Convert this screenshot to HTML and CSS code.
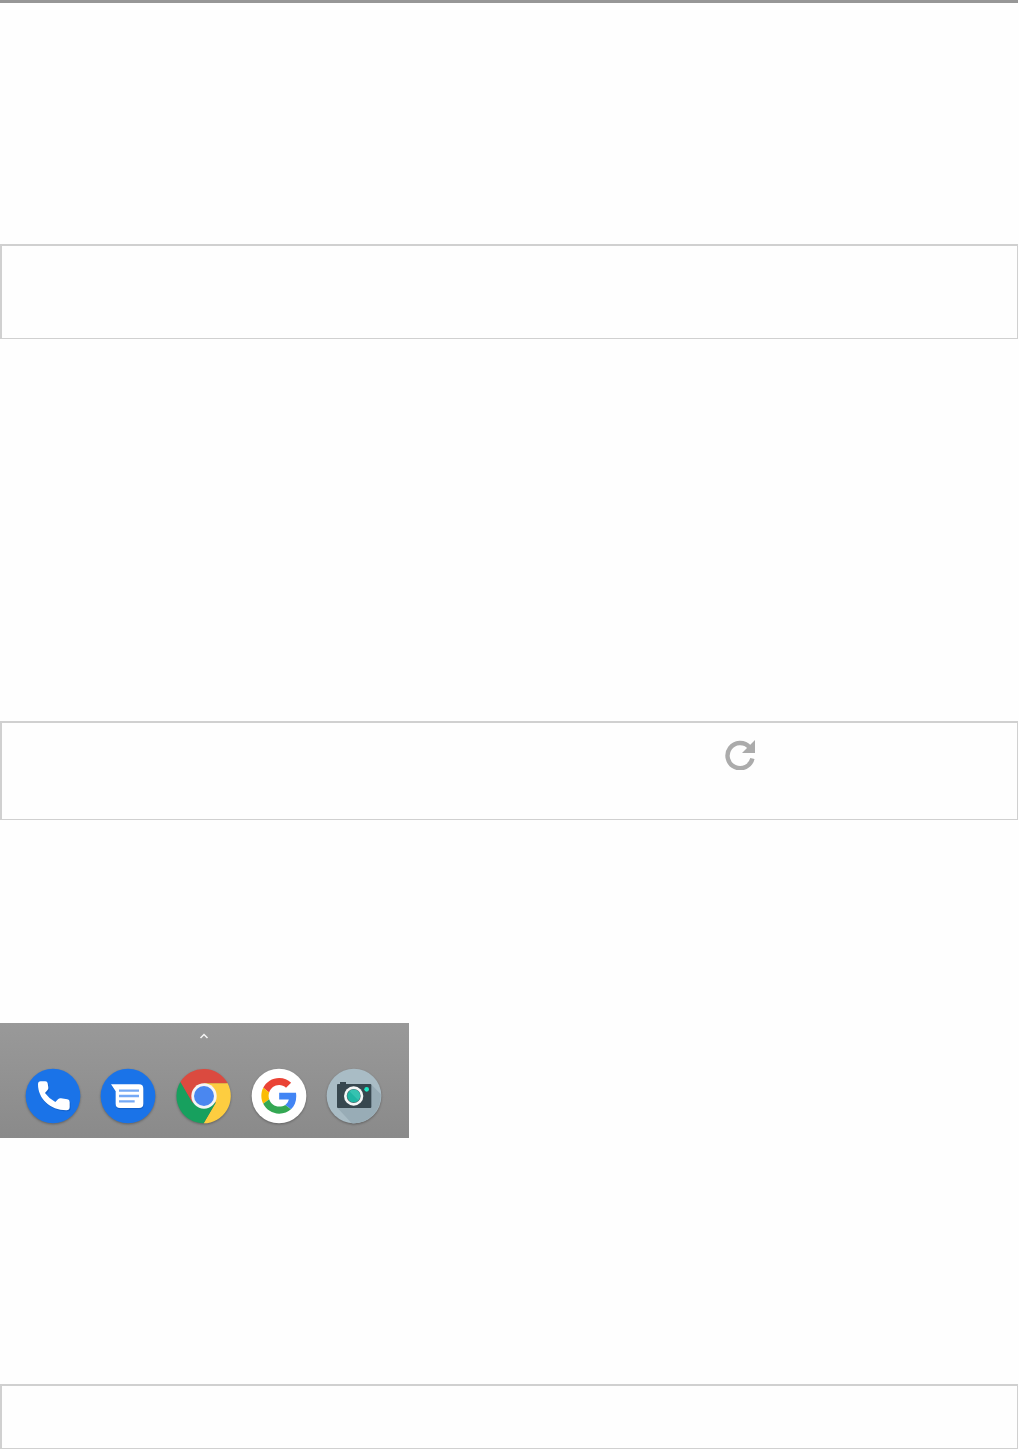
FILE: index.html
```html
<!DOCTYPE html>
<html lang="en">
<head>
    <meta charset="UTF-8">
    <meta name="viewport" content="width=device-width, initial-scale=1.0">
    <title>Home screen</title>
    <link rel="stylesheet" href="styles.css">
</head>
<body>
    <div class="container">
        <hr class="rule">

        <div class="box box-first"></div>

        <div class="box box-refresh">
            <button type="button" class="refresh" aria-label="Refresh">
                <svg viewBox="0 0 30 30">
                    <path fill="none" stroke="#ababab" stroke-width="4.4" d="M24.5 7.2A12.6 12.6 0 1 0 27.4 18.5"/>
                    <path fill="#ababab" d="M30 0v13H17z"/>
                </svg>
            </button>
        </div>

        <nav class="dock">
            <svg class="caret" viewBox="0 0 10 6">
                <path d="M1.500 5 5 1.500 8.500 5" fill="none" stroke="#f4f4f4" stroke-width="1.5"/>
            </svg>
            <div class="apps">
                <a href="#" class="app" aria-label="Phone">
                    <svg viewBox="0 0 168 168">
                        <circle cx="84" cy="84" r="82" fill="#1a73e8"/>
                        <path fill="#0c4fae" opacity=".5" d="M41 54q0-10 8-10h15q6 0 7 6l2 12q1 6-3 9l-7 8q12 18 31 28l8-9q4-3 9-2l19 3q7 1 7 8v13q0 10-10 10C77 130 41 96 41 54z"/>
                        <path fill="#fff" d="M39 49q0-9 8-9h14q6 0 7 6l2 12q1 6-3 9l-7 8q12 17 31 27l8-8q4-4 9-3l19 3q7 1 7 8v15q0 10-10 10C75 127 39 92 39 49z"/>
                    </svg>
                </a>
                <a href="#" class="app" aria-label="Messages">
                    <svg viewBox="0 0 168 168">
                        <circle cx="84" cy="84" r="82" fill="#1a73e8"/>
                        <path fill="#0c4fae" opacity=".5" d="M34 53h84q13 0 13 13v45q0 13-13 13H61q-13 0-13-13V72z"/>
                        <path fill="#fff" d="M33 49h84q13 0 13 13v45q0 13-13 13H60q-13 0-13-13V70z"/>
                        <path d="M57 68h60M57 84h60M57 100h47" fill="none" stroke="#75a9f5" stroke-width="7"/>
                    </svg>
                </a>
                <a href="#" class="app" aria-label="Chrome">
                    <svg viewBox="0 0 168 168">
                        <path fill="#db4a3f" d="M13 42A82 82 0 0 1 155 46H84L49 104z"/>
                        <path fill="#fdcd40" d="M155 46A82 82 0 0 1 83 166l36-62-35-58z"/>
                        <path fill="#17a05e" d="M83 166A82 82 0 0 1 13 42l36 62h70z"/>
                        <circle cx="84" cy="84" r="38" fill="#f5f5f5"/>
                        <circle cx="84" cy="84" r="30" fill="#4a87f0"/>
                    </svg>
                </a>
                <a href="#" class="app" aria-label="Google">
                    <svg viewBox="0 0 168 168">
                        <circle cx="84" cy="84" r="82" fill="#fff"/>
                        <g transform="translate(31 30) scale(2.23)">
                            <path fill="#ea4335" d="M24 9.5c3.54 0 6.71 1.22 9.21 3.6l6.85-6.85C35.9 2.38 30.47 0 24 0 14.62 0 6.51 5.38 2.56 13.22l7.98 6.19C12.43 13.72 17.74 9.5 24 9.5z"/>
                            <path fill="#4285f4" d="M46.98 24.55c0-1.57-.15-3.09-.38-4.55H24v9.02h12.94c-.58 2.96-2.26 5.48-4.78 7.18l7.73 6c4.51-4.18 7.09-10.36 7.09-17.65z"/>
                            <path fill="#fbbc05" d="M10.53 28.59c-.48-1.45-.76-2.99-.76-4.59s.27-3.14.76-4.59l-7.98-6.19C.92 16.46 0 20.12 0 24c0 3.88.92 7.54 2.56 10.78l7.97-6.19z"/>
                            <path fill="#34a853" d="M24 48c6.48 0 11.93-2.13 15.89-5.81l-7.73-6c-2.15 1.45-4.92 2.3-8.16 2.3-6.26 0-11.57-4.22-13.47-9.91l-7.98 6.19C6.51 42.62 14.62 48 24 48z"/>
                        </g>
                    </svg>
                </a>
                <a href="#" class="app" aria-label="Camera">
                    <svg viewBox="0 0 168 168">
                        <circle cx="84" cy="84" r="82" fill="#a9bcc5"/>
                        <path fill="#98acb6" d="M135 49l29 29A82 82 0 0 1 77 166L34 119z"/>
                        <path fill="#37474f" d="M42 42h18v6h73q3 0 3 3v66q0 3-3 3H36q-3 0-3-3V51q0-3 3-3h6z"/>
                        <circle cx="83" cy="84" r="29" fill="#f5f7f7"/>
                        <circle cx="83" cy="84" r="21" fill="#4b6b70"/>
                        <circle cx="83" cy="84" r="19" fill="#1fb5a3"/>
                        <path fill="#35c2b0" d="M70 70a19 19 0 0 1 27 27z"/>
                        <circle cx="122" cy="64" r="7" fill="#1de9c6"/>
                    </svg>
                </a>
            </div>
        </nav>

        <div class="box box-last"></div>
    </div>
</body>
</html>
```
FILE: styles.css
```css
* {
    box-sizing: border-box;
}

body {
    font-family: Roboto, Arial, sans-serif;
    margin: 0;
    background-color: #fefefe;
}

.container {
    display: flex;
    flex-direction: column;
    padding: 0 1px 1px 0;
}

.rule {
    width: 100%;
    height: 3px;
    margin: 0;
    border: none;
    background-color: #979797;
}

.box {
    border: 1px solid #d0d0d0;
    border-top-width: 2px;
    border-left-width: 2px;
}

.box-first {
    min-height: 95px;
    margin-top: 241px;
}

.box-refresh {
    min-height: 99px;
    margin-top: 382px;
    padding: 17px 0 0 71%;
}

.box-last {
    min-height: 65px;
    margin-top: 246px;
}

.refresh {
    display: block;
    width: 30px;
    height: 30px;
    padding: 0;
    border: none;
    background: none;
    cursor: pointer;
}

.refresh svg,
.app svg {
    display: block;
    width: 100%;
}

.dock {
    width: 409px;
    max-width: 100%;
    margin-top: 203px;
    padding: 10px 27px 14px 25px;
    background: linear-gradient(#999, #8a8a8a);
}

.caret {
    display: block;
    width: 10px;
    height: 6px;
    margin: 0 auto 29px;
}

.apps {
    display: flex;
    justify-content: space-between;
}

.app {
    width: 56px;
    border-radius: 50%;
    filter: drop-shadow(0 1px 1px rgba(0, 0, 0, 0.3));
}
```
